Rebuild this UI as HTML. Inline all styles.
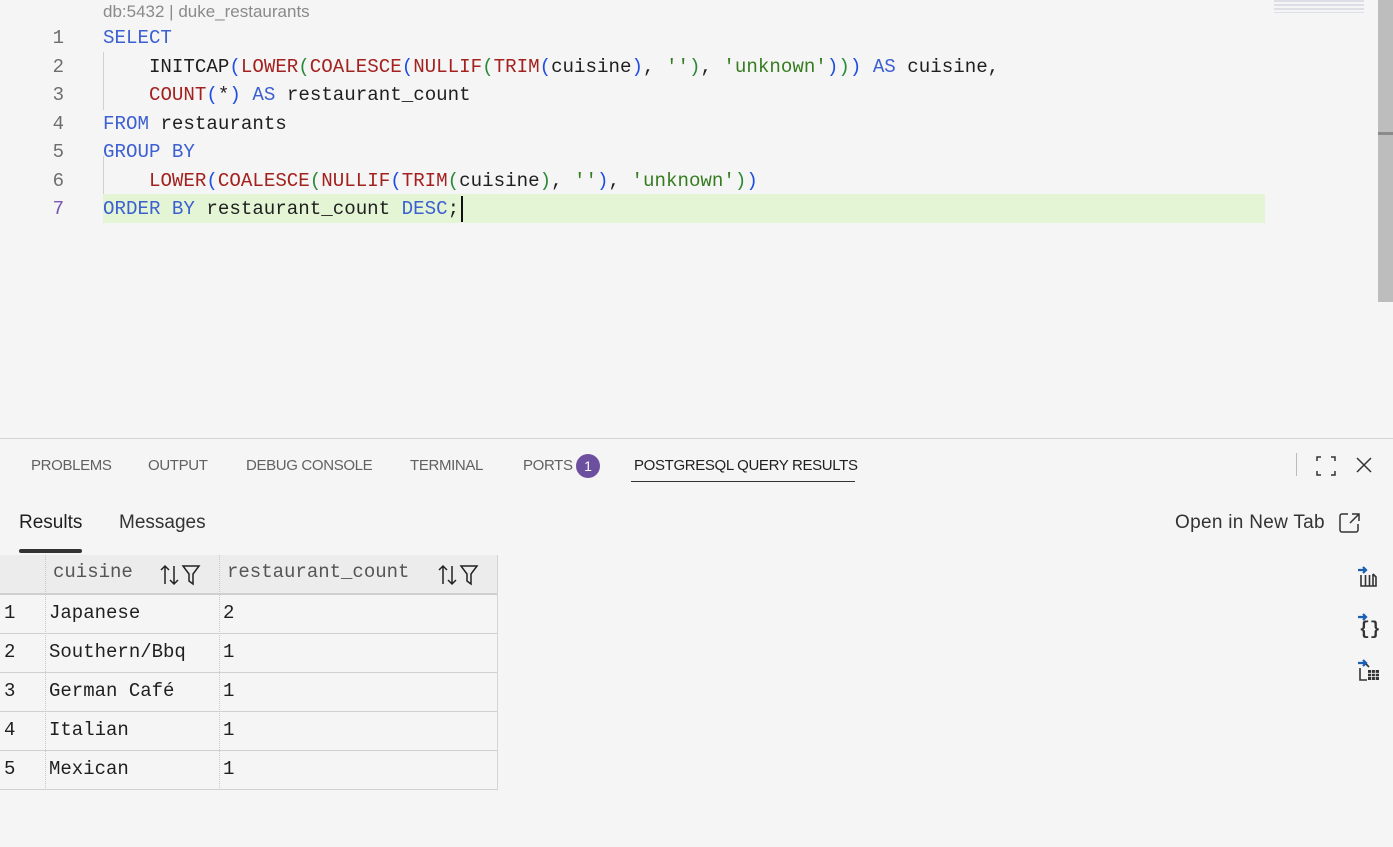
<!DOCTYPE html>
<html><head><meta charset="utf-8"><style>
*{margin:0;padding:0;box-sizing:border-box}
body{width:1393px;height:847px;background:#f5f5f5;position:relative;overflow:hidden;font-family:"Liberation Sans",sans-serif}
.a{position:absolute;white-space:pre}
.code{font-family:"Liberation Mono",monospace;font-size:19.15px;color:#1f1f1f;line-height:28.5px}
.ln{font-family:"Liberation Mono",monospace;font-size:19px;color:#6e6e6e;line-height:28.5px;width:64px;text-align:right}
.k{color:#3c5fd1}.f{color:#a3221f}.s{color:#367c20}.p1{color:#1f4fe0}.p2{color:#2b8a3a}.p3{color:#8a3cc0}
.tab{font-size:15px;color:#616161;top:457px;letter-spacing:-0.35px}
.cell{font-family:"Liberation Mono",monospace;font-size:19px;color:#1f1f1f}
</style></head><body>
<div class="a" style="left:103px;top:2px;font-size:17px;color:#8a8a8a">db:5432 | duke_restaurants</div>
<div class="a" style="left:103px;top:194px;width:1162px;height:29px;background:#e4f5d6"></div>
<div class="a" style="left:103px;top:156px;width:1px;height:38px;background:#d0d0d0"></div>
<div class="a" style="left:103px;top:52px;width:1px;height:58px;background:#d0d0d0"></div>
<div class="a ln" style="left:0;top:24px">1
2
3
4
5
6
<span style="color:#7a55b0">7</span></div>
<div class="a code" style="left:103px;top:24px"><span class="k">SELECT</span>
    INITCAP<span class="p1">(</span><span class="f">LOWER</span><span class="p2">(</span><span class="f">COALESCE</span><span class="p1">(</span><span class="f">NULLIF</span><span class="p2">(</span><span class="f">TRIM</span><span class="p1">(</span>cuisine<span class="p1">)</span>, <span class="s">''</span><span class="p2">)</span>, <span class="s">'unknown'</span><span class="p1">)</span><span class="p2">)</span><span class="p1">)</span> <span class="k">AS</span> cuisine,
    <span class="f">COUNT</span><span class="p1">(</span>*<span class="p1">)</span> <span class="k">AS</span> restaurant_count
<span class="k">FROM</span> restaurants
<span class="k">GROUP BY</span>
    <span class="f">LOWER</span><span class="p1">(</span><span class="f">COALESCE</span><span class="p2">(</span><span class="f">NULLIF</span><span class="p1">(</span><span class="f">TRIM</span><span class="p2">(</span>cuisine<span class="p2">)</span>, <span class="s">''</span><span class="p1">)</span>, <span class="s">'unknown'</span><span class="p2">)</span><span class="p1">)</span>
<span class="k">ORDER BY</span> restaurant_count <span class="k">DESC</span>;</div>
<div class="a" style="left:461px;top:196px;width:2px;height:26px;background:#111"></div>
<div class="a" style="left:1274px;top:0;width:90px;height:13px;opacity:.5;background:repeating-linear-gradient(#c8c8d8 0 2px,transparent 2px 4px)"></div>
<div class="a" style="left:1378px;top:0;width:15px;height:302px;background:#bdbdbd"></div>
<div class="a" style="left:1378px;top:132px;width:15px;height:3px;background:#8a8a8a"></div>
<div class="a" style="left:0;top:438px;width:1393px;height:1px;background:#d4d4d4"></div>
<div class="a tab" style="left:31px">PROBLEMS</div>
<div class="a tab" style="left:148px">OUTPUT</div>
<div class="a tab" style="left:246px">DEBUG CONSOLE</div>
<div class="a tab" style="left:410px">TERMINAL</div>
<div class="a tab" style="left:523px">PORTS</div>
<div class="a" style="left:576px;top:454px;width:24px;height:24px;border-radius:12px;background:#6c4f9e;color:#fff;font-size:14px;text-align:center;line-height:24px">1</div>
<div class="a tab" style="left:634px;color:#1f1f1f">POSTGRESQL QUERY RESULTS</div>
<div class="a" style="left:631px;top:481px;width:224px;height:1px;background:#333"></div>
<div class="a" style="left:1296px;top:453px;width:1px;height:23px;background:#bbb"></div>
<svg class="a" style="left:1315px;top:455px" width="22" height="22" fill="none" stroke="#333" stroke-width="1.5"><path d="M2 6V2h4M16 2h4v4M20 16v4h-4M6 20H2v-4"/></svg>
<svg class="a" style="left:1355px;top:456px" width="18" height="18" fill="none" stroke="#333" stroke-width="1.5"><path d="M2 2l14 14M16 2L2 16"/></svg>
<div class="a" style="left:19px;top:512px;font-size:19px;color:#1f1f1f">Results</div>
<div class="a" style="left:119px;top:512px;font-size:19px;color:#333">Messages</div>
<div class="a" style="left:19px;top:549px;width:63px;height:4px;border-radius:2px;background:#333"></div>
<div class="a" style="left:1175px;top:512px;font-size:19px;color:#333;letter-spacing:0.3px">Open in New Tab</div>
<svg class="a" style="left:1338px;top:511px" width="24" height="24" fill="none" stroke="#333" stroke-width="1.5"><path d="M10 3H4a2 2 0 0 0-2 2v14a2 2 0 0 0 2 2h14a2 2 0 0 0 2-2v-6M14 3h7v7M21 3l-9 9"/></svg>
<svg class="a" style="left:1356px;top:565px" width="26" height="26"><path d="M2 5h8M7 2l3 3-3 3" stroke="#1a5fb4" stroke-width="2.2" fill="none"/><path d="M5 10v11h15V12l-3-3M9.5 10v11M13.5 10v11M17 9v12" stroke="#333" stroke-width="1.6" fill="none"/></svg>
<svg class="a" style="left:1356px;top:612px" width="28" height="26"><path d="M2 5h8M7 2l3 3-3 3" stroke="#1a5fb4" stroke-width="2.2" fill="none"/><text x="3" y="22" font-size="18" font-family="Liberation Mono" font-weight="bold" fill="#333">{}</text></svg>
<svg class="a" style="left:1356px;top:658px" width="28" height="26"><path d="M2 5h8M7 2l3 3-3 3" stroke="#1a5fb4" stroke-width="2.2" fill="none"/><path d="M4 10v12h7M10 6l3 3" stroke="#333" stroke-width="1.6" fill="none"/><rect x="12" y="12" width="11" height="10" fill="#333"/><path d="M12 15.3h11M12 18.6h11M15.6 12v10M19.3 12v10" stroke="#f5f5f5" stroke-width=".8"/></svg>
<div class="a" style="left:0;top:555px;width:497px;height:40px;background:#ececec;border-bottom:2px solid #cfcfcf"></div>
<div class="a" style="left:45px;top:555px;width:1px;height:235px;border-left:1px dotted #c8c8c8"></div>
<div class="a" style="left:219px;top:555px;width:1px;height:235px;border-left:1px dotted #c8c8c8"></div>
<div class="a" style="left:497px;top:555px;width:1px;height:235px;background:#d4d4d4"></div>
<div class="a cell" style="left:53px;top:561px;color:#555">cuisine</div>
<div class="a cell" style="left:227px;top:561px;color:#555">restaurant_count</div>
<svg class="a" style="left:160px;top:563px" width="52" height="24" fill="none" stroke="#222" stroke-width="1.5"><path d="M5 21V3M1 7l4-4 4 4M14 3v18M10 17l4 4 4-4M23 3h16l-6 8v10l-4-3v-7z"/></svg>
<svg class="a" style="left:438px;top:563px" width="52" height="24" fill="none" stroke="#222" stroke-width="1.5"><path d="M5 21V3M1 7l4-4 4 4M14 3v18M10 17l4 4 4-4M23 3h16l-6 8v10l-4-3v-7z"/></svg>
<div class="a" style="left:0;top:633px;width:497px;height:1px;background:#d0d0d0"></div>
<div class="a" style="left:0;top:672px;width:497px;height:1px;background:#d0d0d0"></div>
<div class="a" style="left:0;top:711px;width:497px;height:1px;background:#d0d0d0"></div>
<div class="a" style="left:0;top:750px;width:497px;height:1px;background:#d0d0d0"></div>
<div class="a" style="left:0;top:789px;width:497px;height:1px;background:#d0d0d0"></div>
<div class="a cell" style="left:4px;top:594px;line-height:39px">1
2
3
4
5</div>
<div class="a cell" style="left:49px;top:594px;line-height:39px">Japanese
Southern/Bbq
German Café
Italian
Mexican</div>
<div class="a cell" style="left:223px;top:594px;line-height:39px">2
1
1
1
1</div>
</body></html>
